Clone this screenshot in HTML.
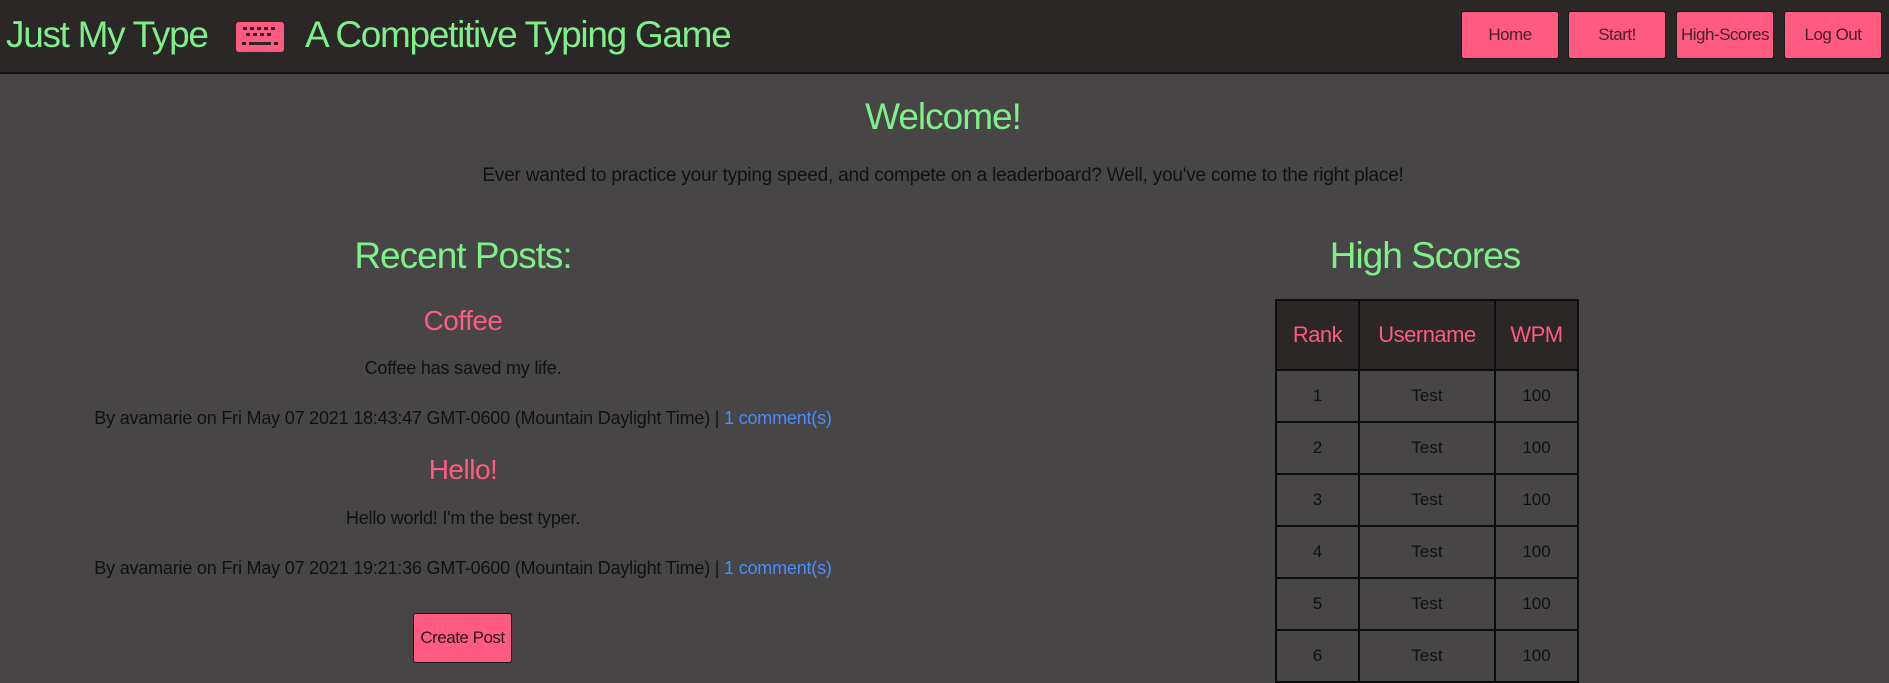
<!DOCTYPE html>
<html><head><meta charset="utf-8"><style>
*{margin:0;padding:0;box-sizing:border-box}
body{width:1889px;height:674px;overflow:hidden;background:#474546;font-family:"Liberation Sans",sans-serif;color:#111;position:relative}
.hdr{position:absolute;left:0;top:0;width:1889px;height:74px;background:#2b2727;border-bottom:2px solid #111}
.t{position:absolute;top:14px;font-size:37px;color:#7ef08a;letter-spacing:-1.3px;white-space:nowrap}
.btn{position:absolute;top:11px;width:98px;height:48px;background:#ff5a80;border:1px solid #1a1a1a;border-radius:3px;color:#4a2030;font-size:17px;text-align:center;line-height:46px;letter-spacing:-0.5px;white-space:nowrap}
.c{position:absolute;text-align:center;white-space:nowrap;transform:translateX(-50%)}
.g{color:#7ef08a;font-size:37px;letter-spacing:-1px}
.p{color:#ff5a80;font-size:28px;letter-spacing:-0.5px}
.s{font-size:18px;letter-spacing:-0.2px}
a{color:#4a8cff;text-decoration:none}
table{position:absolute;left:1275px;top:299px;border-collapse:collapse}
td,th{border:2px solid #0c0c0c;text-align:center;font-size:17px;font-weight:normal}
th{background:#2b2727;color:#ff5a80;height:70px;font-size:22px;letter-spacing:-0.5px}
td{height:52px}
</style></head><body>
<div class="hdr">
<div class="t" style="left:6px">Just My Type</div>
<svg style="position:absolute;left:236px;top:22px" width="48" height="30" viewBox="0 0 48 30"><rect width="48" height="30" rx="3" fill="#ff5a80"/><g fill="#2b2727"><rect x="7" y="5" width="4" height="3"/><rect x="14" y="5" width="4" height="3"/><rect x="21" y="5" width="4" height="3"/><rect x="28" y="5" width="4" height="3"/><rect x="35" y="5" width="4" height="3"/><rect x="10" y="11" width="4" height="3"/><rect x="17" y="11" width="4" height="3"/><rect x="24" y="11" width="4" height="3"/><rect x="31" y="11" width="4" height="3"/><rect x="6" y="20" width="4" height="3"/><rect x="13" y="20" width="22" height="3"/><rect x="38" y="20" width="4" height="3"/></g></svg>
<div class="t" style="left:305px">A Competitive Typing Game</div>
<div class="btn" style="left:1461px">Home</div>
<div class="btn" style="left:1568px">Start!</div>
<div class="btn" style="left:1676px">High-Scores</div>
<div class="btn" style="left:1784px">Log Out</div>
</div>
<div class="c g" style="left:943px;top:96px">Welcome!</div>
<div class="c s" style="left:943px;top:165px;font-size:19px">Ever wanted to practice your typing speed, and compete on a leaderboard? Well, you've come to the right place!</div>
<div class="c g" style="left:463px;top:235px">Recent Posts:</div>
<div class="c g" style="left:1425px;top:235px">High Scores</div>
<div class="c p" style="left:463px;top:305px">Coffee</div>
<div class="c s" style="left:463px;top:358px">Coffee has saved my life.</div>
<div class="c s" style="left:463px;top:408px">By avamarie on Fri May 07 2021 18:43:47 GMT-0600 (Mountain Daylight Time) | <a>1 comment(s)</a></div>
<div class="c p" style="left:463px;top:454px">Hello!</div>
<div class="c s" style="left:463px;top:508px">Hello world! I'm the best typer.</div>
<div class="c s" style="left:463px;top:558px">By avamarie on Fri May 07 2021 19:21:36 GMT-0600 (Mountain Daylight Time) | <a>1 comment(s)</a></div>
<div class="btn" style="left:413px;top:613px;width:99px;height:50px;line-height:48px;color:#2b1a20">Create Post</div>
<table>
<tr><th style="width:83px">Rank</th><th style="width:136px">Username</th><th style="width:83px">WPM</th></tr>
<tr><td>1</td><td>Test</td><td>100</td></tr>
<tr><td>2</td><td>Test</td><td>100</td></tr>
<tr><td>3</td><td>Test</td><td>100</td></tr>
<tr><td>4</td><td>Test</td><td>100</td></tr>
<tr><td>5</td><td>Test</td><td>100</td></tr>
<tr><td>6</td><td>Test</td><td>100</td></tr>
</table>
</body></html>
